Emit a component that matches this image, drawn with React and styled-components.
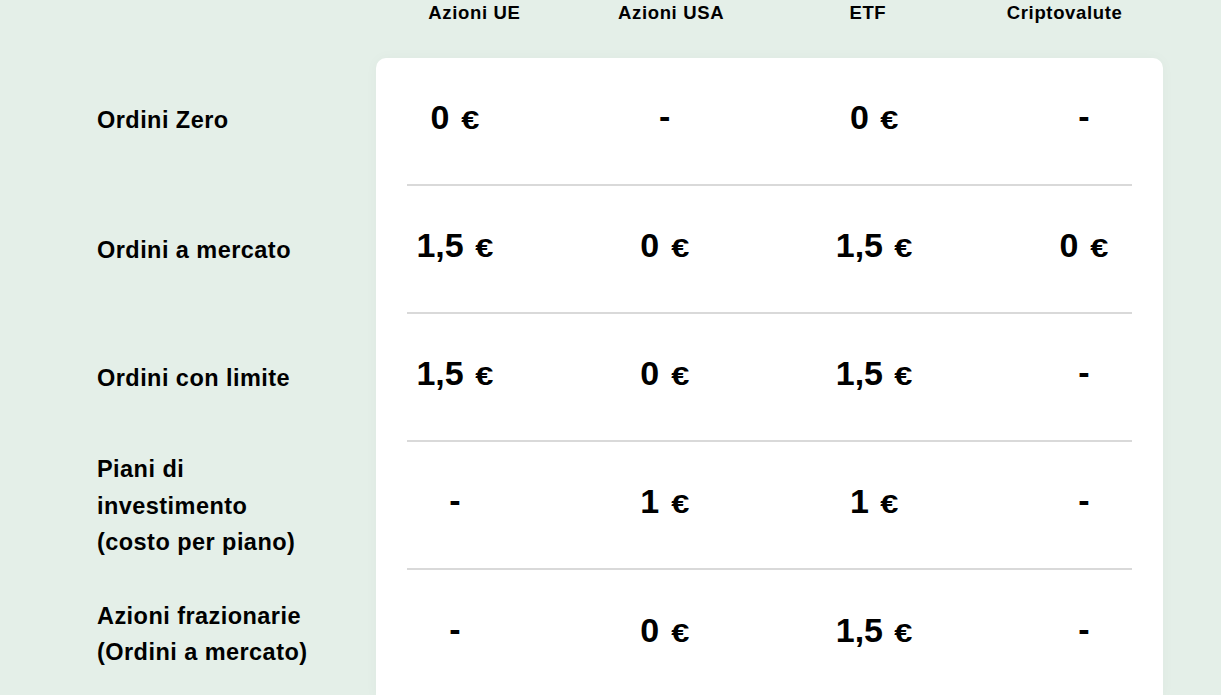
import styled, { createGlobalStyle } from 'styled-components';

const GlobalStyle = createGlobalStyle`
  html, body {
    margin: 0;
    padding: 0;
    background: #e4efe8;
  }
  body {
    font-family: "Liberation Sans", Arial, sans-serif;
    color: #000;
    overflow: hidden;
  }
`;

const Page = styled.div`
  width: 1221px;
  height: 695px;
  overflow: hidden;
  padding-left: 97px;
  box-sizing: border-box;
`;

const HeaderRow = styled.div`
  margin-left: 279px;
  width: 787px;
  height: 58px;
  display: grid;
  grid-template-columns: repeat(4, 1fr);
`;

const HeaderCell = styled.div`
  text-align: center;
  font-size: 18.5px;
  font-weight: 700;
  letter-spacing: 0.65px;
  line-height: 24px;
  padding-top: 1px;
`;

const Body = styled.div`
  display: flex;
`;

const Labels = styled.div`
  width: 279px;
  display: flex;
  flex-direction: column;
`;

const Label = styled.div`
  height: 128px;
  display: flex;
  align-items: center;
  font-size: 23.5px;
  font-weight: 700;
  line-height: 36.5px;
  letter-spacing: 0.45px;
  padding-bottom: ${({ $lift }) => $lift || 0}px;
  box-sizing: border-box;
`;

const Card = styled.div`
  width: 787px;
  background: #fff;
  border-radius: 10px 10px 0 0;
  padding: 0 31px;
  box-sizing: border-box;
  box-shadow: 0 0 14px rgba(0, 40, 20, 0.03);
`;

const Row = styled.div`
  height: 128px;
  display: grid;
  grid-template-columns: repeat(4, 96px);
  justify-content: space-between;
  align-items: center;
  border-bottom: ${({ $last }) => ($last ? 'none' : '2px solid #d9d9d9')};
  box-sizing: border-box;
`;

const Value = styled.div`
  text-align: center;
  font-size: 34px;
  font-weight: 700;
  line-height: 40px;
  white-space: nowrap;
  margin-top: ${({ $dash }) => ($dash ? -10 : -6)}px;
`;

const Euro = styled.span`
  display: inline-block;
  font-size: 26px;
  margin: 0 2px 0 4px;
  transform: scaleX(1.25);
`;

const columns = ['Azioni UE', 'Azioni USA', 'ETF', 'Criptovalute'];

const rows = [
  { label: ['Ordini Zero'], lift: 4, values: ['0', null, '0', null] },
  { label: ['Ordini a mercato'], values: ['1,5', '0', '1,5', '0'] },
  { label: ['Ordini con limite'], values: ['1,5', '0', '1,5', null] },
  { label: ['Piani di', 'investimento', '(costo per piano)'], values: [null, '1', '1', null] },
  { label: ['Azioni frazionarie', '(Ordini a mercato)'], values: [null, '0', '1,5', null] },
];

const Price = ({ amount }) =>
  amount === null ? (
    <Value $dash>-</Value>
  ) : (
    <Value>
      {amount} <Euro>€</Euro>
    </Value>
  );

export default function App() {
  return (
    <Page>
      <GlobalStyle />
      <HeaderRow>
        {columns.map((c) => (
          <HeaderCell key={c}>{c}</HeaderCell>
        ))}
      </HeaderRow>
      <Body>
        <Labels>
          {rows.map((r) => (
            <Label key={r.label[0]} $lift={r.lift}>
              <div>
                {r.label.map((line) => (
                  <div key={line}>{line}</div>
                ))}
              </div>
            </Label>
          ))}
        </Labels>
        <Card>
          {rows.map((r, i) => (
            <Row key={r.label[0]} $last={i === rows.length - 1}>
              {r.values.map((v, j) => (
                <Price key={j} amount={v} />
              ))}
            </Row>
          ))}
        </Card>
      </Body>
    </Page>
  );
}
